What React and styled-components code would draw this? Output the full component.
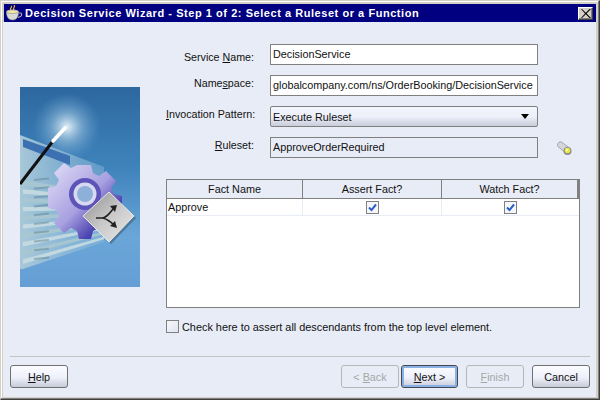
import React from "react";
import styled, { createGlobalStyle } from "styled-components";

const Global = createGlobalStyle`
  html, body { margin: 0; padding: 0; background: #d4d0c8; }
  body { font-family: "Liberation Sans", Arial, sans-serif; font-size: 11px; color: #111; }
`;

const Win = styled.div`
  box-sizing: border-box; width: 600px; height: 400px; display: flex; flex-direction: column;
  background: #d4d0c8; padding: 4px 3px 2px 2px;
  border-right: 1px solid #404040; border-bottom: 1px solid #404040;
  border-top: 1px solid #d4d0c8; border-left: 1px solid #d4d0c8;
  box-shadow: inset -1px -1px 0 #808080, inset 1px 1px 0 #fff;
`;
const TitleBar = styled.div`
  height: 18px; margin: -1px 0 0 1px; background: #000080; color: #fff; display: flex; align-items: center;
  padding: 0 3px 0 1px; flex: none;
`;
const TitleText = styled.div`
  font: bold 11px "Liberation Sans", Arial, sans-serif; letter-spacing: 0.55px; margin-left: 2px; flex: 1; white-space: nowrap;
`;
const CloseBtn = styled.div`
  box-sizing: border-box; width: 15px; height: 13px; background: #d4d0c8; display: flex; align-items: center; justify-content: center;
  border: 1px solid; border-color: #fff #404040 #404040 #fff; box-shadow: inset -1px -1px 0 #808080;
`;
const Client = styled.div`
  flex: 1; display: flex; flex-direction: column; background: #e8ecf6; min-height: 0;
`;
const Main = styled.div`
  flex: 1; display: flex; min-height: 0;
`;
const ArtCol = styled.div`
  width: 120px; height: 200px; margin: 65px 26px 0 17px; flex: none;
  svg { display: block; }
`;
const FormCol = styled.div`
  flex: 1; display: flex; flex-direction: column; padding-top: 22px;
`;
const Fields = styled.div`
  display: grid; grid-template-columns: 88px 268px 42px; column-gap: 16px; row-gap: 10px; align-items: center;
`;
const Label = styled.div`
  text-align: right; white-space: nowrap; padding: ${p => p.$down ? "4px 0 0" : "0 0 5px"}; font-size: 10.7px;
`;
const U = styled.span` text-decoration: underline; `;
const Field = styled.div`
  box-sizing: border-box; height: 21px; border: 1px solid #808080; background: ${p => p.$ro ? "#e8ecf6" : "#fff"};
  padding: 0 1px 0 2px; line-height: 19px; font-size: 10.8px; white-space: nowrap; overflow: hidden;
`;
const Combo = styled.div`
  box-sizing: border-box; height: 21px; border: 1px solid #808080; border-radius: 2px;
  background: linear-gradient(#f3f5fc, #eef0fa 50%, #c9cdda); padding: 0 8px 0 2px; display: flex; align-items: center; justify-content: space-between;
  font-size: 10.8px;
`;
const Arrow = styled.div`
  width: 0; height: 0; border-left: 4.5px solid transparent; border-right: 4.5px solid transparent; border-top: 5px solid #000;
`;
const BulbWrap = styled.div`
  padding: 3px 0 0 3px; svg { display: block; }
`;
const Grid = styled.div`
  box-sizing: border-box; width: 414px; height: 129px; margin-top: 21px; border: 1px solid #808080; background: #fff;
`;
const Head = styled.div`
  display: grid; grid-template-columns: 136px 139px 1fr; height: 19px; box-sizing: border-box; border-bottom: 1px solid #808080;
`;
const HeadCell = styled.div`
  text-align: center; line-height: 18px; background: #e8ecf6; font-size: 10.8px;
  border-right: ${p => p.$last ? "2px solid #808080" : "1px solid #808080"};
`;
const Row = styled.div`
  display: grid; grid-template-columns: 136px 139px 1fr; height: 16px; border-bottom: 1px solid #e8ecf6;
`;
const Cell = styled.div`
  border-right: ${p => p.$last ? "0" : "1px solid #e8ecf6"}; font-size: 10.8px; line-height: 16px; display: flex; align-items: center; justify-content: ${p => p.$c ? "center" : "flex-start"};
  padding-left: ${p => p.$c ? 0 : "1px"};
`;
const Box = styled.div`
  box-sizing: border-box; width: 13px; height: 13px; border: 1px solid #808080; background: ${p => p.$on ? "#f4f6fc" : "linear-gradient(135deg,#f6f7fc,#e0e4f0)"};
  display: flex; align-items: center; justify-content: center; flex: none;
`;
const CheckLine = styled.label`
  display: flex; align-items: center; gap: 3px; margin-top: 12px; font-size: 10.88px; white-space: nowrap; height: 13px;
`;
const Sep = styled.div`
  height: 1px; background: #c4c4c0; margin: 0 6px 0 7px; flex: none;
`;
const Footer = styled.div`
  display: flex; align-items: flex-start; flex: none; height: 40px; padding: 8px 6px 0 7px; box-sizing: border-box;
`;
const Btn = styled.div`
  box-sizing: border-box; width: ${p => p.$w || 58}px; height: 23px; margin-left: ${p => p.$ml || 0}px; border-radius: 3px;
  border: 1px solid ${p => p.$dis ? "#b4b8b4" : p.$sel ? "#44484c" : "#707070"};
  color: ${p => p.$dis ? "#a4a8a8" : "#111"};
  background: ${p => p.$dis ? "#e8ecf6" : "linear-gradient(#fbfcff,#eef0fa 55%,#c8ccd8)"};
  box-shadow: ${p => p.$sel ? "inset 0 0 0 2px #8ab0e8" : "none"};
  display: flex; align-items: center; justify-content: center; font-size: 10.8px;
`;

const Cup = () => (
  <svg width="18" height="17" viewBox="0 0 18 17">
    <path d="M6 1c2 1-2 2 0 4M9 0c2 2-2 3 0 5" stroke="#f0b020" strokeWidth="1.2" fill="none" />
    <ellipse cx="7.5" cy="7" rx="6" ry="2" fill="#f4e8a0" stroke="#c0c0c0" />
    <path d="M1.5 7c0 5 2 8 6 8s6-3 6-8c-2 2-10 2-12 0z" fill="#d8d8d8" stroke="#909090" strokeWidth=".6" />
    <path d="M13.5 8h2c1.5 0 1.5 3 0 3.5l-2.5 1" stroke="#b0b0b0" strokeWidth="1.2" fill="none" />
  </svg>
);
const CloseX = () => (
  <svg width="10" height="9" viewBox="0 0 10 9"><path d="M1 0l3.8 3.7L8.5 0H10L5.6 4.4 10 9H8.5L4.8 5.2 1 9H0l4-4.6L0 0z" fill="#000" /></svg>
);
const Tick = () => (
  <svg width="9" height="9" viewBox="0 0 9 9"><path d="M1 4.5l2.5 2.6L8 1.5" stroke="#2a5cc8" strokeWidth="2" fill="none" /></svg>
);
const Bulb = () => (
  <svg width="16" height="17" viewBox="0 0 16 17">
    <path d="M1 2.5c1-2 3-2 4-1l7 5-4 5-7-6c-1-1-.5-2 0-3z" fill="#d4d6dc" stroke="#8c8c94" strokeWidth=".7" />
    <circle cx="10.5" cy="10" r="4" fill="#8a8a90" />
    <circle cx="10.5" cy="9.5" r="2.8" fill="#e8e840" />
    <circle cx="10" cy="9" r="1.2" fill="#f8f8a0" />
  </svg>
);

const bands = Array.from({ length: 10 }, (_, i) => i);
const left = t => 48 + 134 * t;
const right = t => 80 + 75 * t;
const band = i => 0.34 + i * 0.0655;

const Art = () => (
  <svg width="120" height="200" viewBox="0 0 120 200">
    <defs>
      <linearGradient id="sky" x1="0" y1="0" x2="0" y2="1">
        <stop offset="0" stopColor="#2d689f" />
        <stop offset=".4" stopColor="#3f83bb" />
        <stop offset=".75" stopColor="#6aa6d8" />
        <stop offset="1" stopColor="#659ed4" />
      </linearGradient>
      <radialGradient id="glow">
        <stop offset="0" stopColor="#eef6fc" stopOpacity=".95" />
        <stop offset=".45" stopColor="#a8cce4" stopOpacity=".5" />
        <stop offset="1" stopColor="#6ba3d8" stopOpacity="0" />
      </radialGradient>
      <linearGradient id="sheet" x1="0" y1="0" x2="1" y2="0">
        <stop offset="0" stopColor="#a8c8d8" />
        <stop offset="1" stopColor="#8cb8d8" stopOpacity=".45" />
      </linearGradient>
      <linearGradient id="gearG" x1="0" y1="0" x2="1" y2="1">
        <stop offset="0" stopColor="#e4e0f8" />
        <stop offset=".5" stopColor="#a8a0e0" />
        <stop offset=".75" stopColor="#4c44b0" />
        <stop offset="1" stopColor="#3a3498" />
      </linearGradient>
      <linearGradient id="dia" x1="0" y1="0" x2="1" y2="1">
        <stop offset="0" stopColor="#8c8c8c" />
        <stop offset=".5" stopColor="#c8c8c8" />
        <stop offset="1" stopColor="#ececec" />
      </linearGradient>
    </defs>
    <rect width="120" height="200" fill="url(#sky)" />
    <circle cx="47" cy="40" r="34" fill="url(#glow)" />
    <polygon points="0,48 84,80 84,155 3,182 0,182" fill="url(#sheet)" />
    <polygon points="3,52 50,69 50,78 3,60" fill="#3c70b0" />
    {bands.map(i => (
      <polygon
        key={i}
        points={`3,${left(band(i))} 84,${right(band(i))} 84,${right(band(i) + 0.033)} 3,${left(band(i) + 0.033)}`}
        fill={i % 2 ? "#c6dbe2" : "#a9c6d0"}
        opacity=".9"
      />
    ))}
    {bands.map(i => (
      <rect key={i} x="14" y={left(band(i)) - 1.5} width="15" height="2" fill="#5c7c8c" opacity=".45" transform={`rotate(-6 14 ${left(band(i))})`} />
    ))}
    <path d="M0 97L33 54" stroke="#111" strokeWidth="3" />
    <path d="M33 54L45 41" stroke="#fff" strokeWidth="3.6" strokeLinecap="round" />
    <g transform="translate(65 107)">
      <path d="M-6-29h12l2 8 6 3 7-5 10 10-5 7 3 6 8 2v12l-8 2-3 6 5 7-10 10-7-5-6 3-2 8H-6l-2-8-6-3-7 5-10-10 5-7-3-6-8-2V-6l8-2 3-6-5-7 10-10 7 5 6-3z" fill="url(#gearG)" />
      <circle r="16" fill="#5c54b8" />
      <circle r="11.5" fill="#d8d8f0" />
      <circle r="8" fill="#8cb0d8" />
    </g>
    <polygon points="91,107 116,131 91,157 65,131" fill="#345" opacity=".45" />
    <polygon points="89,105 114,129 89,155 63,129" fill="url(#dia)" stroke="#e8e8e8" strokeWidth="1" />
    <path d="M76 131h6c4 0 7-4 11-9M82 131c4 0 7 3 11 6" stroke="#222" strokeWidth="1.6" fill="none" />
    <path d="M97 118l-7 1 5 6zM97 141l-2-7-5 5z" fill="#222" />
  </svg>
);

export default function App() {
  return (
    <>
      <Global />
      <Win>
        <TitleBar>
          <Cup />
          <TitleText>Decision Service Wizard - Step 1 of 2: Select a Ruleset or a Function</TitleText>
          <CloseBtn><CloseX /></CloseBtn>
        </TitleBar>
        <Client>
          <Main>
            <ArtCol><Art /></ArtCol>
            <FormCol>
              <Fields>
                <Label $down>Service <U>N</U>ame:</Label>
                <Field>DecisionService</Field>
                <span />
                <Label>Name<U>s</U>pace:</Label>
                <Field>globalcompany.com/ns/OrderBooking/DecisionService</Field>
                <span />
                <Label><U>I</U>nvocation Pattern:</Label>
                <Combo>Execute Ruleset<Arrow /></Combo>
                <span />
                <Label><U>R</U>uleset:</Label>
                <Field $ro>ApproveOrderRequired</Field>
                <BulbWrap><Bulb /></BulbWrap>
              </Fields>
              <Grid>
                <Head>
                  <HeadCell>Fact Name</HeadCell>
                  <HeadCell>Assert Fact?</HeadCell>
                  <HeadCell $last>Watch Fact?</HeadCell>
                </Head>
                <Row>
                  <Cell>Approve</Cell>
                  <Cell $c><Box $on><Tick /></Box></Cell>
                  <Cell $c $last><Box $on><Tick /></Box></Cell>
                </Row>
              </Grid>
              <CheckLine><Box />Check here to assert all descendants from the top level element.</CheckLine>
            </FormCol>
          </Main>
          <Sep />
          <Footer>
            <Btn><span><U>H</U>elp</span></Btn>
            <Btn $dis $ml={273}><span>&lt; <U>B</U>ack</span></Btn>
            <Btn $sel $ml={2} $w={57}><span><U>N</U>ext &gt;</span></Btn>
            <Btn $dis $ml={8}><span><U>F</U>inish</span></Btn>
            <Btn $ml={8}>Cancel</Btn>
          </Footer>
        </Client>
      </Win>
    </>
  );
}
